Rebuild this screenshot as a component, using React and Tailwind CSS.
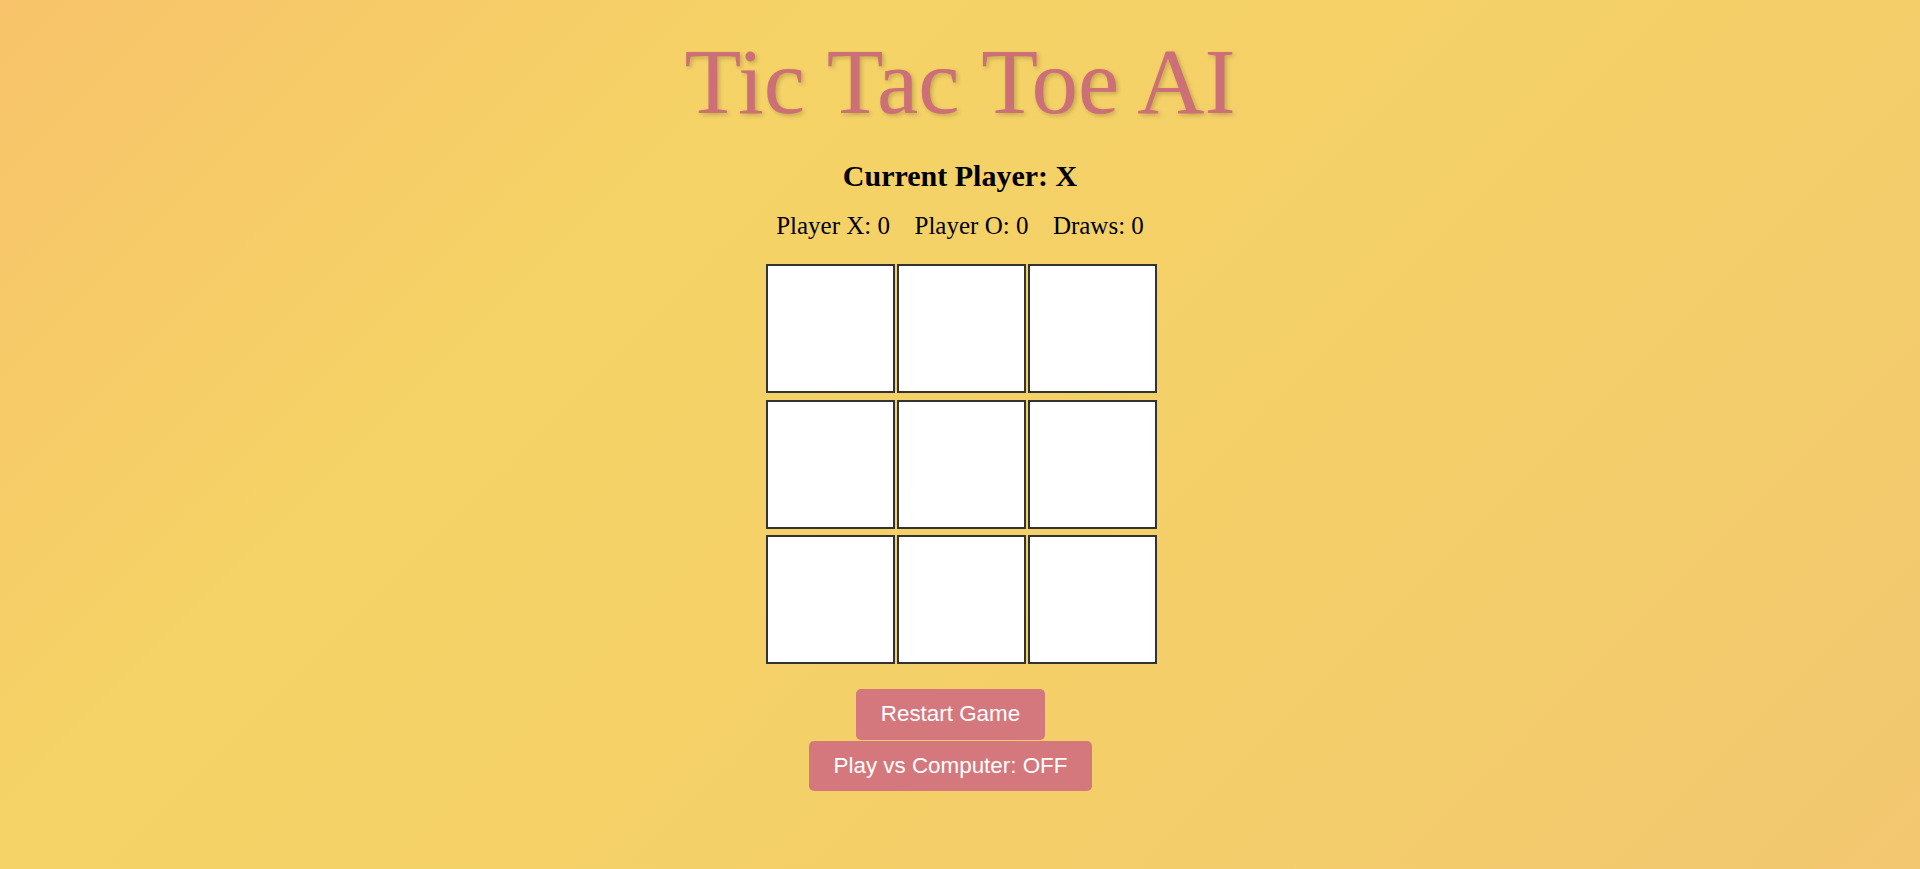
import { useState } from "react"

const lines = [
  [0, 1, 2], [3, 4, 5], [6, 7, 8],
  [0, 3, 6], [1, 4, 7], [2, 5, 8],
  [0, 4, 8], [2, 4, 6],
]

function winnerOf(board) {
  for (const [a, b, c] of lines) {
    if (board[a] && board[a] === board[b] && board[a] === board[c]) return board[a]
  }
  return null
}

export default function App() {
  const [board, setBoard] = useState(Array(9).fill(null))
  const [player, setPlayer] = useState("X")
  const [scores, setScores] = useState({ X: 0, O: 0, draws: 0 })
  const [vsComputer, setVsComputer] = useState(false)

  const play = (i) => {
    if (board[i] || winnerOf(board)) return
    const next = board.slice()
    next[i] = player
    setBoard(next)
    const w = winnerOf(next)
    if (w) setScores(s => ({ ...s, [w]: s[w] + 1 }))
    else if (next.every(Boolean)) setScores(s => ({ ...s, draws: s.draws + 1 }))
    else setPlayer(player === "X" ? "O" : "X")
  }

  const restart = () => {
    setBoard(Array(9).fill(null))
    setPlayer("X")
  }

  return (
    <div className="min-h-screen bg-[linear-gradient(135deg,#f8c36a_0%,#f5d366_30%,#f4cf69_65%,#f2c770_100%)] flex flex-col items-center font-['Liberation_Serif',serif]">
      <h1 className="pt-[37px] text-[93px] leading-[90px] font-normal text-[#cd6f77] [text-shadow:2px_2px_4px_rgba(0,0,0,0.2)]">
        Tic Tac Toe AI
      </h1>

      <h2 className="mt-[34px] text-[30px] leading-[30px] font-bold text-black">
        Current Player: {player}
      </h2>

      <div className="mt-[22px] flex gap-[24.5px] text-[25px] leading-[25px] text-black">
        <span>Player X: {scores.X}</span>
        <span>Player O: {scores.O}</span>
        <span>Draws: {scores.draws}</span>
      </div>

      <div className="mt-[26px] ml-[3px] grid grid-cols-[repeat(3,129.5px)] gap-x-[1.5px] gap-y-[6.5px]">
        {board.map((cell, i) => (
          <button
            key={i}
            onClick={() => play(i)}
            className="w-[129.5px] h-[129px] bg-white border-2 border-[#333333] text-[60px] text-[#333333] cursor-pointer"
          >
            {cell}
          </button>
        ))}
      </div>

      <div className="mt-[25px] mr-[19px] flex flex-col items-center font-['Liberation_Sans',sans-serif]">
        <button
          onClick={restart}
          className="h-[50.5px] px-[25px] bg-[#d5787d] text-white text-[22.4px] rounded-[5px] cursor-pointer"
        >
          Restart Game
        </button>
        <button
          onClick={() => setVsComputer(v => !v)}
          className="mt-[1px] h-[50.5px] px-[25px] bg-[#d5787d] text-white text-[22.4px] rounded-[5px] cursor-pointer"
        >
          Play vs Computer: {vsComputer ? "ON" : "OFF"}
        </button>
      </div>
    </div>
  )
}
